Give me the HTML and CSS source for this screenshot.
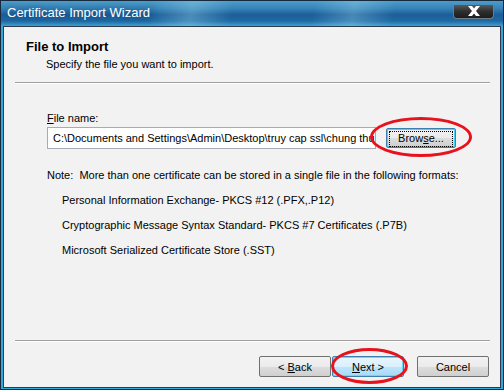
FILE: index.html
```html
<!DOCTYPE html>
<html lang="en">
<head>
    <meta charset="UTF-8">
    <title>Certificate Import Wizard</title>
    <link rel="stylesheet" href="styles.css">
</head>
<body>
<div class="window">
    <div class="titlebar">
        <span class="caption">Certificate Import Wizard</span>
        <a href="" class="close">
            <svg width="16" height="10" viewBox="0 0 16 10"><path d="M2 0h4l2 2.5 2-2.5h4l-4 5 4 5h-4l-2-2.5-2 2.5h-4l4-5z" fill="#fff"/></svg>
        </a>
    </div>

    <div class="client">
        <div class="header">
            <h1>File to Import</h1>
            <p>Specify the file you want to import.</p>
        </div>
        <div class="rule"></div>

        <div class="content">
            <label><u>F</u>ile name:</label>
            <div class="file-row">
                <div class="field">C:\Documents and Settings\Admin\Desktop\truy cap ssl\chung thu</div>
                <div class="mark">
                    <button class="btn focus"><span>Brow<u>s</u>e...</span></button>
                    <div class="ring ring-browse"></div>
                </div>
            </div>
            <p class="note">Note:&nbsp; More than one certificate can be stored in a single file in the following formats:</p>
            <ul class="formats">
                <li>Personal Information Exchange- PKCS #12 (.PFX,.P12)</li>
                <li>Cryptographic Message Syntax Standard- PKCS #7 Certificates (.P7B)</li>
                <li>Microsoft Serialized Certificate Store (.SST)</li>
            </ul>
        </div>

        <div class="rule"></div>
        <div class="footer">
            <button class="btn">&lt; <u>B</u>ack</button>
            <div class="mark">
                <button class="btn default"><u>N</u>ext &gt;</button>
                <div class="ring ring-next"></div>
            </div>
            <button class="btn cancel">Cancel</button>
        </div>
    </div>
</div>
</body>
</html>
```

FILE: styles.css
```css
*{
    padding: 0;
    margin: 0;
}
html, body{
    background: #f2f2f2;
}
.window{
    width: 504px;
    height: 390px;
    box-sizing: border-box;
    border: 1px solid #16293d;
    padding: 0 2px 1px 2px;
    display: flex;
    flex-direction: column;
    background: #31a9dd;
}
.titlebar{
    height: 25px;
    margin: 0 -2px;
    padding: 0 9px 0 6px;
    display: flex;
    align-items: center;
    justify-content: space-between;
    background:
        linear-gradient(100deg, rgba(255,255,255,0) 30%, rgba(160,220,240,.35) 38%, rgba(255,255,255,0) 46%, rgba(255,255,255,0) 62%, rgba(170,225,245,.3) 70%, rgba(255,255,255,0) 78%),
        linear-gradient(to bottom, #4e9cc8 0%, #3583b8 30%, #1c5e98 55%, #1f6aa4 80%, #3fa0d2 100%);
}
.caption{
    color: #fff;
    font-family: "Liberation Sans", Arial, sans-serif;
    font-size: 13px;
    text-shadow: 0 0 6px rgba(20,50,90,.6);
    padding-bottom: 2px;
}
.close{
    width: 41px;
    height: 14px;
    margin-bottom: 4px;
    display: flex;
    align-items: center;
    justify-content: center;
    box-sizing: border-box;
    border: 1px solid #6e7c88;
    border-top: none;
    border-radius: 0 0 4px 4px;
    background: linear-gradient(to bottom, #5a5a5a 0%, #2e2e2e 50%, #1c1c1c 100%);
}
.client{
    flex: 1;
    display: flex;
    flex-direction: column;
    background: #f2f2f2;
    border: 1px solid #2c3b4a;
    font-family: "Liberation Sans", Arial, sans-serif;
    font-size: 11px;
    color: #000;
}
.header{
    padding: 12px 0 11px 22px;
}
.header h1{
    font-size: 13px;
    line-height: 16px;
    font-weight: bold;
}
.header p{
    margin: 2px 0 0 20px;
    line-height: 14px;
}
.rule{
    height: 1px;
    margin: 0 10px 0 11px;
    background: #a0a0a0;
    border-bottom: 1px solid #fff;
}
.content{
    flex: 1;
    padding: 27px 0 0 43px;
    line-height: 14px;
}
label{
    display: block;
}
.file-row{
    margin-top: 2px;
    display: flex;
    align-items: center;
    gap: 10px;
}
.field{
    width: 329px;
    height: 22px;
    box-sizing: border-box;
    border: 1px solid #a5acb5;
    background: #fff;
    padding: 3px 0 0 5px;
    white-space: nowrap;
    overflow: hidden;
}
.mark{
    position: relative;
}
.btn{
    width: 72px;
    height: 21px;
    box-sizing: border-box;
    border: 1px solid #707070;
    border-radius: 2px;
    background: linear-gradient(to bottom, #f2f2f2 0%, #ebebeb 50%, #dddddd 51%, #cfcfcf 100%);
    font-family: "Liberation Sans", Arial, sans-serif;
    font-size: 11px;
    color: #000;
}
.btn.focus{
    width: 70px;
    height: 20px;
    border-color: #3c7fb1;
    padding: 2px;
    box-shadow: inset 0 0 0 1px #48d0f8;
}
.btn.focus span{
    display: block;
    height: 100%;
    line-height: 13px;
    border: 1px dotted #000;
}
.btn.default{
    border-color: #3c7fb1;
    background: linear-gradient(to bottom, #eaf6fd 0%, #d9f0fc 50%, #bee6fd 51%, #a7d9f5 100%);
    box-shadow: inset 0 0 0 1px #6ad7fb;
}
.ring{
    position: absolute;
    border: 3px solid #e8121c;
    border-radius: 50%;
    box-sizing: border-box;
}
.ring-browse{
    left: -16px;
    top: -11px;
    width: 102px;
    height: 40px;
}
.ring-next{
    left: -1px;
    top: -8px;
    width: 77px;
    height: 36px;
}
.note{
    margin-top: 19px;
}
.formats{
    list-style: none;
    padding-left: 15px;
}
.formats li{
    margin-top: 11px;
}
.footer{
    display: flex;
    justify-content: flex-end;
    gap: 1px;
    padding: 14px 11px 10px 0;
}
.cancel{
    margin-left: 12px;
}
```
